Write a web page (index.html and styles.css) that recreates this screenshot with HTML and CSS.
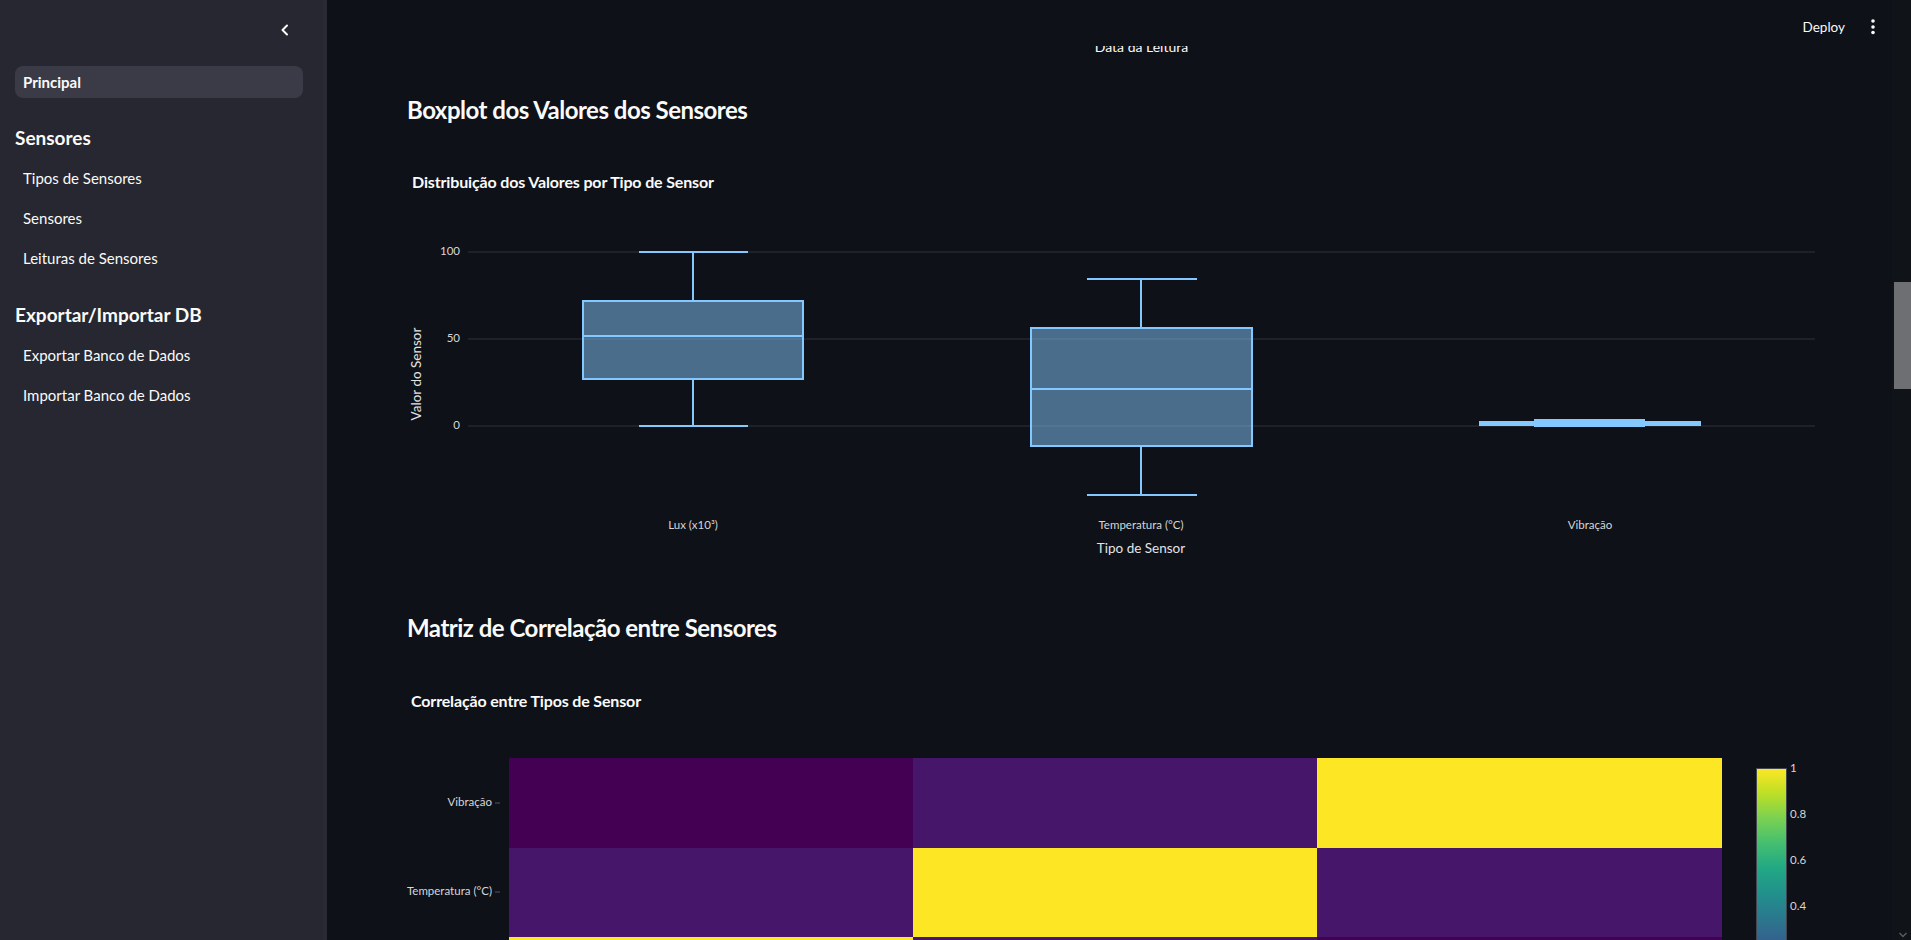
FILE: index.html
```html
<!DOCTYPE html>
<html lang="pt">
<head>
<meta charset="utf-8">
<title>Painel de Sensores</title>
<link rel="stylesheet" href="styles.css">
</head>
<body>
<div class="app">
  <aside class="sidebar">
    <div class="sidebar-top">
      <span class="collapse-btn" aria-label="Recolher barra lateral">
        <svg width="14" height="14" viewBox="0 0 14 14"><path d="M9 2.5 L4.5 7 L9 11.5" fill="none" stroke="#fafafa" stroke-width="2" stroke-linecap="round" stroke-linejoin="round"/></svg>
      </span>
    </div>
    <nav class="nav">
      <a class="nav-item active">Principal</a>
      <div class="nav-section">Sensores</div>
      <a class="nav-item">Tipos de Sensores</a>
      <a class="nav-item">Sensores</a>
      <a class="nav-item">Leituras de Sensores</a>
      <div class="nav-section second">Exportar/Importar DB</div>
      <a class="nav-item">Exportar Banco de Dados</a>
      <a class="nav-item">Importar Banco de Dados</a>
    </nav>
  </aside>

  <main class="main">
    <div class="content">
      <div class="chart-tail"><span>Data da Leitura</span></div>

      <h2 class="section-title">Boxplot dos Valores dos Sensores</h2>
      <svg class="chart" width="1424" height="438" viewBox="0 0 1424 438">
        <text class="chart-title" x="5" y="34">Distribuição dos Valores por Tipo de Sensor</text>
        <g class="grid">
          <line x1="61" x2="1408" y1="102" y2="102"/>
          <line x1="61" x2="1408" y1="189" y2="189"/>
          <line x1="61" x2="1408" y1="276" y2="276"/>
        </g>
        <g class="tick-y">
          <text x="53" y="102">100</text>
          <text x="53" y="189">50</text>
          <text x="53" y="276">0</text>
        </g>
        <text class="axis-title" transform="translate(11 224) rotate(-90)">Valor do Sensor</text>

        <g class="box">
          <line x1="286" x2="286" y1="102" y2="151"/>
          <line x1="286" x2="286" y1="229" y2="276"/>
          <line x1="232" x2="341" y1="102" y2="102"/>
          <line x1="232" x2="341" y1="276" y2="276"/>
          <rect x="176" y="151" width="220" height="78"/>
          <line x1="176" x2="396" y1="186" y2="186"/>
        </g>
        <g class="box">
          <line x1="734" x2="734" y1="129" y2="178"/>
          <line x1="734" x2="734" y1="296" y2="345"/>
          <line x1="680" x2="790" y1="129" y2="129"/>
          <line x1="680" x2="790" y1="345" y2="345"/>
          <rect x="624" y="178" width="221" height="118"/>
          <line x1="624" x2="845" y1="239" y2="239"/>
        </g>
        <g class="flat-box">
          <rect x="1072" y="271" width="222" height="5"/>
          <rect x="1127" y="269" width="111" height="8"/>
        </g>

        <g class="tick-x">
          <text x="286" y="376">Lux (x10³)</text>
          <text x="734" y="376">Temperatura (°C)</text>
          <text x="1183" y="376">Vibração</text>
        </g>
        <text class="axis-title center" x="734" y="400">Tipo de Sensor</text>
      </svg>

      <h2 class="section-title">Matriz de Correlação entre Sensores</h2>
      <svg class="chart" width="1424" height="272" viewBox="0 0 1424 272">
        <defs>
          <linearGradient id="viridis" x1="0" y1="0" x2="0" y2="1">
            <stop offset="0" stop-color="#fde725"/>
            <stop offset="0.1" stop-color="#bddf26"/>
            <stop offset="0.2" stop-color="#7ad151"/>
            <stop offset="0.3" stop-color="#44bf70"/>
            <stop offset="0.4" stop-color="#22a884"/>
            <stop offset="0.5" stop-color="#21918c"/>
            <stop offset="0.6" stop-color="#2a788e"/>
            <stop offset="0.7" stop-color="#355f8d"/>
            <stop offset="0.8" stop-color="#414487"/>
            <stop offset="0.9" stop-color="#482475"/>
            <stop offset="1" stop-color="#440154"/>
          </linearGradient>
        </defs>
        <text class="chart-title" x="4" y="35">Correlação entre Tipos de Sensor</text>

        <rect x="102" y="90" width="404" height="90" fill="#440154"/>
        <rect x="506" y="90" width="404" height="90" fill="#46166a"/>
        <rect x="910" y="90" width="405" height="90" fill="#fde725"/>
        <rect x="102" y="180" width="404" height="89" fill="#46166a"/>
        <rect x="506" y="180" width="404" height="89" fill="#fde725"/>
        <rect x="910" y="180" width="405" height="89" fill="#46166a"/>
        <rect x="102" y="269" width="404" height="90" fill="#fde725"/>
        <rect x="506" y="269" width="404" height="90" fill="#46166a"/>
        <rect x="910" y="269" width="405" height="90" fill="#440154"/>

        <g class="tick-y">
          <text x="85" y="135">Vibração</text>
          <text x="85" y="224">Temperatura (°C)</text>
        </g>
        <g class="tick-mark">
          <line x1="88" x2="93" y1="135" y2="135"/>
          <line x1="88" x2="93" y1="224" y2="224"/>
        </g>

        <rect class="colorbar" x="1349.5" y="100.5" width="30" height="249" fill="url(#viridis)"/>
        <g class="tick-cb">
          <text x="1383" y="101">1</text>
          <text x="1383" y="147">0.8</text>
          <text x="1383" y="193">0.6</text>
          <text x="1383" y="239">0.4</text>
        </g>
      </svg>
    </div>

    <header class="topbar">
      <span class="deploy">Deploy</span>
      <span class="kebab" aria-label="Menu">
        <svg width="6" height="18" viewBox="0 0 6 18"><circle cx="3" cy="3" r="1.8" fill="#fafafa"/><circle cx="3" cy="9" r="1.8" fill="#fafafa"/><circle cx="3" cy="14.5" r="1.8" fill="#fafafa"/></svg>
      </span>
    </header>

    <div class="scroll-track">
      <div class="scroll-thumb"></div>
      <svg class="scroll-arrow" width="10" height="6" viewBox="0 0 10 6"><path d="M1.5 1 L5 4.5 L8.5 1" fill="none" stroke="#5c5e63" stroke-width="1.3"/></svg>
    </div>
  </main>
</div>
</body>
</html>
```

FILE: styles.css
```css
* { box-sizing: border-box; }

html, body {
  margin: 0;
  padding: 0;
}

body {
  background: #0e1117;
  color: #fafafa;
  font-family: Lato, "Liberation Sans", sans-serif;
  width: 1911px;
  height: 940px;
  overflow: hidden;
}

.app {
  display: flex;
  height: 940px;
}

/* Sidebar */
.sidebar {
  width: 327px;
  flex: none;
  background: #262730;
  display: flex;
  flex-direction: column;
  border-right: 4px solid #292a33;
}

.sidebar-top {
  height: 60px;
  display: flex;
  align-items: center;
  justify-content: flex-end;
  padding-right: 31px;
}

.collapse-btn {
  display: flex;
  width: 14px;
  height: 14px;
}

.nav {
  display: flex;
  flex-direction: column;
  padding: 0 20px 0 15px;
}

.nav-item {
  display: block;
  height: 40px;
  line-height: 40px;
  padding-left: 8px;
  font-size: 15px;
  color: #fafafa;
}

.nav-item.active {
  height: 32px;
  line-height: 32px;
  margin-top: 6px;
  background: #3a3b47;
  border-radius: 8px;
  font-weight: 700;
}

.nav-section {
  font-size: 19px;
  font-weight: 700;
  line-height: 32px;
  margin-top: 24px;
  margin-bottom: 4px;
}

.nav-section.second {
  margin-top: 21px;
}

/* Main */
.main {
  flex: 1;
  position: relative;
  overflow: hidden;
  height: 940px;
}

.content {
  padding: 0 80px;
}

.chart-tail {
  height: 70px;
  padding: 37px 16px 0 61px;
  text-align: center;
  font-size: 14px;
  line-height: 20px;
}

.section-title {
  margin: 0;
  padding: 20px 0;
  font-size: 24px;
  letter-spacing: -0.5px;
  line-height: 40px;
  font-weight: 700;
  color: #fafafa;
}

.chart {
  display: block;
  overflow: visible;
  font-family: Lato, "Liberation Sans", sans-serif;
}

.chart-title {
  font-size: 16px;
  letter-spacing: -0.15px;
  font-weight: 700;
  fill: #fafafa;
  dominant-baseline: middle;
}

.grid line {
  stroke: #30333a;
  stroke-width: 1;
}

.tick-y text {
  font-size: 11.5px;
  fill: #d6d6d8;
  text-anchor: end;
  dominant-baseline: middle;
}

.tick-x text {
  font-size: 11.5px;
  fill: #d6d6d8;
  text-anchor: middle;
  dominant-baseline: middle;
}

.tick-mark line {
  stroke: #55575d;
  stroke-width: 1;
}

.tick-cb text {
  font-size: 11.5px;
  fill: #d6d6d8;
  dominant-baseline: middle;
}

.axis-title {
  font-size: 13.5px;
  fill: #e4e4e6;
  text-anchor: middle;
  dominant-baseline: middle;
}

.box rect {
  fill: rgba(131, 201, 255, 0.5);
  stroke: #83c9ff;
  stroke-width: 2;
}

.box line {
  stroke: #83c9ff;
  stroke-width: 2;
}

.flat-box rect {
  fill: #83c9ff;
}

.colorbar {
  stroke: #444650;
  stroke-width: 1;
}

/* Top bar overlay */
.topbar {
  position: absolute;
  top: 0;
  left: 0;
  right: 0;
  height: 46px;
  padding: 8px 35px 0 0;
  background: #0e1117;
  display: flex;
  align-items: center;
  justify-content: flex-end;
  gap: 25px;
  z-index: 2;
}

.deploy {
  font-size: 13.5px;
  color: #fafafa;
}

.kebab {
  display: flex;
}

/* Scrollbar overlay */
.scroll-track {
  position: absolute;
  top: 0;
  right: 0;
  bottom: 0;
  width: 19px;
  background: #101318;
  z-index: 3;
}

.scroll-thumb {
  position: absolute;
  top: 282px;
  left: 2px;
  right: 0;
  height: 107px;
  background: #6d6f73;
}

.scroll-arrow {
  position: absolute;
  left: 6px;
  bottom: 2px;
}
```
